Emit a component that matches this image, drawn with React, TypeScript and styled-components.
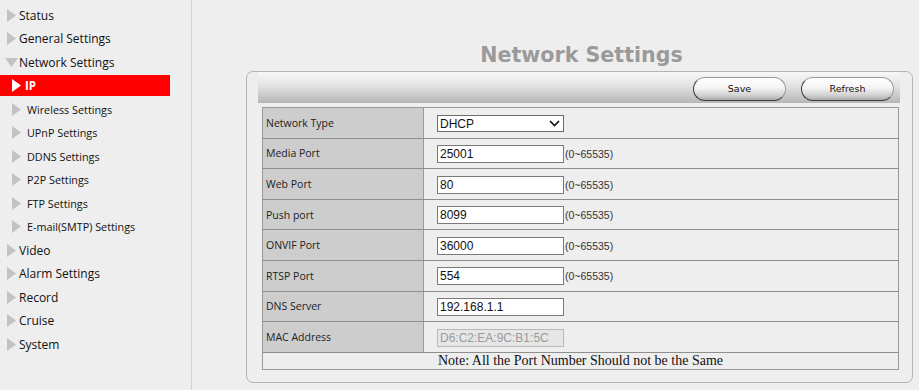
import React from "react";
import styled, { createGlobalStyle } from "styled-components";

const GlobalStyle = createGlobalStyle`
  html, body {
    margin: 0;
    padding: 0;
    background: #eeeeee;
  }
  #root {
    height: 390px;
  }
`;

interface NavItem {
  label: string;
  sub?: boolean;
  open?: boolean;
  active?: boolean;
}

const navItems: NavItem[] = [
  { label: "Status" },
  { label: "General Settings" },
  { label: "Network Settings", open: true },
  { label: "IP", sub: true, active: true },
  { label: "Wireless Settings", sub: true },
  { label: "UPnP Settings", sub: true },
  { label: "DDNS Settings", sub: true },
  { label: "P2P Settings", sub: true },
  { label: "FTP Settings", sub: true },
  { label: "E-mail(SMTP) Settings", sub: true },
  { label: "Video" },
  { label: "Alarm Settings" },
  { label: "Record" },
  { label: "Cruise" },
  { label: "System" },
];

interface Field {
  label: string;
  value: string;
  kind: "select" | "port" | "text" | "disabled";
}

const fields: Field[] = [
  { label: "Network Type", value: "DHCP", kind: "select" },
  { label: "Media Port", value: "25001", kind: "port" },
  { label: "Web Port", value: "80", kind: "port" },
  { label: "Push port", value: "8099", kind: "port" },
  { label: "ONVIF Port", value: "36000", kind: "port" },
  { label: "RTSP Port", value: "554", kind: "port" },
  { label: "DNS Server", value: "192.168.1.1", kind: "text" },
  { label: "MAC Address", value: "D6:C2:EA:9C:B1:5C", kind: "disabled" },
];

const Arrow = ({ open, white }: { open?: boolean; white?: boolean }) => {
  const fill = white ? "#ffffff" : "#c2c2c2";
  return open ? (
    <svg width="13" height="9" viewBox="0 0 13 9">
      <polygon points="0,0 13,0 6.5,9" fill={fill} />
    </svg>
  ) : (
    <svg width="9" height="13" viewBox="0 0 9 13">
      <polygon points="0,0 9,6.5 0,13" fill={fill} />
    </svg>
  );
};

export default function App() {
  return (
    <>
      <GlobalStyle />
      <Page>
        <Sidebar>
          {navItems.map((item) => (
            <NavRow
              key={item.label}
              $sub={item.sub}
              $open={item.open}
              $active={item.active}
            >
              <Arrow open={item.open} white={item.active} />
              <span>{item.label}</span>
            </NavRow>
          ))}
        </Sidebar>
        <Main>
          <Title>Network Settings</Title>
          <Panel>
            <Toolbar>
              <PillButton>Save</PillButton>
              <PillButton>Refresh</PillButton>
            </Toolbar>
            <Table>
              <tbody>
                {fields.map((f) => (
                  <Row key={f.label}>
                    <LabelCell>{f.label}</LabelCell>
                    <ValueCell>
                      {f.kind === "select" ? (
                        <SelectWrap>
                          <Select defaultValue={f.value}>
                            <option>DHCP</option>
                            <option>Static IP</option>
                          </Select>
                          <Chevron width="11" height="7" viewBox="0 0 11 7">
                            <polyline
                              points="1,1 5.5,5.5 10,1"
                              fill="none"
                              stroke="#111"
                              strokeWidth="1.6"
                            />
                          </Chevron>
                        </SelectWrap>
                      ) : (
                        <TextInput
                          defaultValue={f.value}
                          disabled={f.kind === "disabled"}
                        />
                      )}
                      {f.kind === "port" && <Hint>(0~65535)</Hint>}
                    </ValueCell>
                  </Row>
                ))}
                <NoteRow>
                  <td colSpan={2}>Note: All the Port Number Should not be the Same</td>
                </NoteRow>
              </tbody>
            </Table>
          </Panel>
        </Main>
      </Page>
    </>
  );
}

const Page = styled.div`
  display: flex;
  height: 390px;
  background: #eeeeee;
`;

const Sidebar = styled.nav`
  width: 192px;
  flex-shrink: 0;
  border-right: 1px solid #d2d2d2;
  display: flex;
  flex-direction: column;
  gap: 2.5px;
  padding-top: 4.5px;
  box-sizing: border-box;
`;

const NavRow = styled.div<{ $sub?: boolean; $open?: boolean; $active?: boolean }>`
  width: 170px;
  height: 21px;
  display: flex;
  align-items: center;
  box-sizing: border-box;
  padding-left: ${(p) => (p.$sub ? "12px" : p.$open ? "5px" : "7px")};
  gap: ${(p) => (p.$sub ? (p.$active ? "4px" : "6px") : p.$open ? "1px" : "3px")};
  background: ${(p) => (p.$active ? "#ff0000" : "transparent")};
  color: ${(p) => (p.$active ? "#ffffff" : "#111111")};
  font-family: "Open Sans", "Liberation Sans", sans-serif;
  font-size: ${(p) => (p.$sub ? (p.$active ? "11.5px" : "10.8px") : "12px")};
  font-weight: ${(p) => (p.$active ? 700 : 400)};
  white-space: nowrap;

  svg {
    flex-shrink: 0;
  }
`;

const Main = styled.main`
  flex: 1;
  padding: 0 6px 0 54px;
  box-sizing: border-box;
`;

const Title = styled.h1`
  margin: 43px 0 0;
  height: 24px;
  line-height: 24px;
  text-align: center;
  font-family: "DejaVu Sans", Verdana, sans-serif;
  font-size: 20.6px;
  font-weight: 700;
  color: #9a9a9a;
  padding-left: 4px;
`;

const Panel = styled.section`
  margin-top: 4px;
  height: 312px;
  box-sizing: border-box;
  border: 1px solid #b4b4b4;
  border-radius: 7px;
  padding: 0 12px 0 11px;
`;

const Toolbar = styled.div`
  height: 31px;
  display: flex;
  justify-content: flex-end;
  align-items: center;
  gap: 15px;
  padding-right: 6px;
  background: linear-gradient(#f7f7f7, #e2e2e2 45%, #b6b6b6);
`;

const PillButton = styled.button`
  width: 93px;
  height: 24px;
  margin-top: 2px;
  border-radius: 12px;
  border: 1px solid #9a9a9a;
  border-left-color: #3c3c3c;
  border-bottom-color: #3c3c3c;
  background: linear-gradient(#ffffff, #f4f4f4 45%, #cfcfcf 80%, #a8a8a8);
  font-family: "DejaVu Sans", Verdana, sans-serif;
  font-size: 9.5px;
  color: #111;
  padding: 0;
  cursor: pointer;
`;

const Table = styled.table`
  margin: 4px 1px 0 4px;
  width: calc(100% - 5px);
  border-collapse: collapse;
  border: 1px solid #999;
`;

const Row = styled.tr`
  height: 30.6px;
  td {
    border-bottom: 1px solid #8f8f8f;
  }
`;

const LabelCell = styled.td`
  width: 157px;
  padding: 0 0 0 3px;
  background: #cdcdcd;
  border-right: 1px solid #9a9a9a;
  font-family: "Open Sans", "Liberation Sans", sans-serif;
  font-size: 10.5px;
  color: #222;
`;

const ValueCell = styled.td`
  padding: 0 0 0 13px;
  white-space: nowrap;
`;

const TextInput = styled.input`
  width: 127px;
  height: 18px;
  box-sizing: border-box;
  border: 1px solid #7a7a7a;
  border-radius: 0;
  padding: 0 2px;
  vertical-align: middle;
  font-family: "Liberation Sans", Arial, sans-serif;
  font-size: 12px;
  color: #111;
  background: #ffffff;

  &:disabled {
    background: #e6e6e6;
    border-color: #b8b8b8;
    color: #9a9a9a;
  }
`;

const SelectWrap = styled.span`
  position: relative;
  display: inline-block;
  vertical-align: middle;
`;

const Select = styled.select`
  appearance: none;
  width: 127px;
  height: 17px;
  box-sizing: border-box;
  border: 1px solid #6c6c6c;
  border-radius: 0;
  padding: 0 2px;
  background: #ffffff;
  font-family: "Liberation Sans", Arial, sans-serif;
  font-size: 12px;
  color: #111;
  display: block;
`;

const Chevron = styled.svg`
  position: absolute;
  right: 4px;
  top: 5px;
  pointer-events: none;
`;

const Hint = styled.span`
  vertical-align: middle;
  margin-left: 1px;
  font-family: "Liberation Sans", Arial, sans-serif;
  font-size: 10.5px;
  color: #333;
`;

const NoteRow = styled.tr`
  height: 17px;
  td {
    padding: 0;
    text-align: center;
    font-family: "Liberation Serif", "Times New Roman", serif;
    font-size: 14px;
    color: #111;
    line-height: 16px;
  }
`;
